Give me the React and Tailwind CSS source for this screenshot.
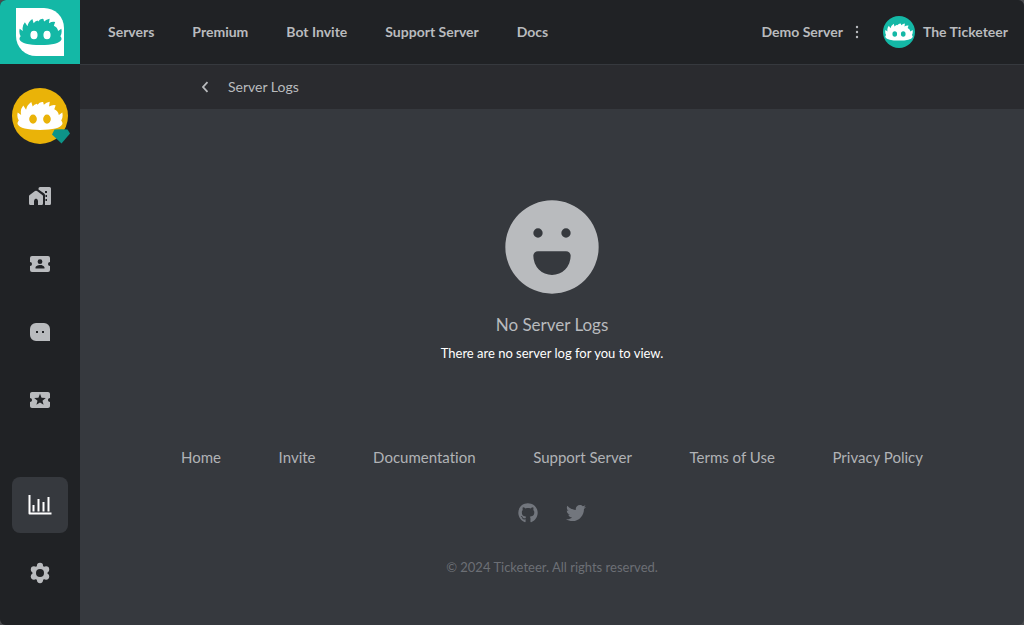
import { FaGithub, FaTwitter } from "react-icons/fa";
import { MdLocalActivity } from "react-icons/md";

const navLinks = ["Servers", "Premium", "Bot Invite", "Support Server", "Docs"];
const footerLinks = ["Home", "Invite", "Documentation", "Support Server", "Terms of Use", "Privacy Policy"];

// Spiky-haired mascot face; the eyes are holes so the backdrop shows through.
function Mascot({ className }) {
  return (
    <svg viewBox="0 0 132 84" className={className} fill="currentColor" fillRule="evenodd" aria-hidden="true">
      <path d="M5 56Q-1 46 2 33L12 40Q8 25 18 13L26 25Q28 12 41 3L45 16Q49 10 57 8L59 11Q65 1 75 3L77 11Q84 3 94 2L92 16Q101 10 111 12L107 24Q118 29 120 40L130 33Q133 46 127 56Q132 62 130 67Q122 83 66 83Q10 83 2 67Q0 62 5 56ZM46 39A11 13 0 1 0 46 65 11 13 0 1 0 46 39ZM86 39A11 13 0 1 0 86 65 11 13 0 1 0 86 39Z" />
    </svg>
  );
}

function HomeIcon() {
  return (
    <svg viewBox="0 0 24 24" className="size-6" fill="currentColor" fillRule="evenodd" aria-hidden="true">
      <path d="M12 3H21.500A1.500 1.500 0 0 1 23 4.500V19.500A1.500 1.500 0 0 1 21.500 21H17V11.200Q17 10.200 16.200 9.600L10.500 5.500V4.500A1.500 1.500 0 0 1 12 3ZM17 7V9H19V7ZM17.500 11V13H19V11ZM17.500 15V17H19V15Z" />
      <path d="M7 7.100Q8 6.400 9 7.100L14.300 11Q15 11.500 15 12.400V19.500A1.500 1.500 0 0 1 13.500 21H10V17Q10 15.500 8 14.600Q6 15.500 6 17V21H2.500A1.500 1.500 0 0 1 1 19.500V12.400Q1 11.500 1.700 11Z" />
    </svg>
  );
}

function TicketPersonIcon() {
  return (
    <svg viewBox="0 0 24 24" className="size-6" fill="currentColor" fillRule="evenodd" aria-hidden="true">
      <path d="M20 12a2 2 0 0 1 2-2V6a2 2 0 0 0-2-2H4a2 2 0 0 0-2 2v4a2 2 0 0 1 0 4v4a2 2 0 0 0 2 2h16a2 2 0 0 0 2-2v-4a2 2 0 0 1-2-2ZM12 7.300a2.400 2.400 0 1 1 0 4.800 2.400 2.400 0 0 1 0-4.800ZM7.500 16.500v-1c0-1.600 3-2.500 4.500-2.500s4.500.9 4.500 2.500v1Z" />
    </svg>
  );
}

function ChatIcon() {
  return (
    <svg viewBox="0 0 24 24" className="size-6" fill="currentColor" fillRule="evenodd" aria-hidden="true">
      <path d="M8 3h8a6 6 0 0 1 6 6v12H8a6 6 0 0 1-6-6V9a6 6 0 0 1 6-6ZM8 11v2h2v-2ZM14 11v2h2v-2Z" />
    </svg>
  );
}

function ChartIcon() {
  return (
    <svg viewBox="0 0 24 24" className="size-6" fill="none" stroke="currentColor" strokeWidth="2" aria-hidden="true">
      <path d="M1.500 2V20.500H23.500" strokeLinejoin="round" />
      <path d="M5.500 18.500V12M10.500 18.500V6M15.500 18.500V9M20.500 18.500V4" />
    </svg>
  );
}

function GearIcon() {
  return (
    <svg viewBox="0 0 24 24" className="size-6" aria-hidden="true">
      <g fill="currentColor">
        <circle cx="12" cy="12" r="7.600" />
        <circle cx="12" cy="4.900" r="3.100" />
        <circle cx="12" cy="19.100" r="3.100" />
        <circle cx="5.900" cy="8.450" r="3.100" />
        <circle cx="18.100" cy="8.450" r="3.100" />
        <circle cx="5.900" cy="15.550" r="3.100" />
        <circle cx="18.100" cy="15.550" r="3.100" />
      </g>
      <circle cx="12" cy="12" r="4" className="fill-[#202225]" />
    </svg>
  );
}

function SmileIcon() {
  return (
    <svg viewBox="0 0 24 24" className="size-28" fill="currentColor" fillRule="evenodd" aria-hidden="true">
      <path d="M12 2a10 10 0 1 1 0 20 10 10 0 0 1 0-20ZM9 8a1 1 0 1 0 0 2 1 1 0 0 0 0-2ZM15 8a1 1 0 1 0 0 2 1 1 0 0 0 0-2ZM9 12.900a1 1 0 0 0-1 1a4 4.100 0 0 0 8 0a1 1 0 0 0-1-1Z" />
    </svg>
  );
}

function MoreIcon() {
  return (
    <svg viewBox="0 0 20 20" className="size-5" fill="currentColor" aria-hidden="true">
      <circle cx="10" cy="5" r="1.200" />
      <circle cx="10" cy="10" r="1.200" />
      <circle cx="10" cy="15" r="1.200" />
    </svg>
  );
}

function BackIcon() {
  return (
    <svg viewBox="0 0 24 24" className="size-6" fill="none" stroke="currentColor" strokeWidth="1.800" aria-hidden="true">
      <path d="M15.500 7.200 11 12l4.500 4.800" />
    </svg>
  );
}

function SideLink({ label, active, children }) {
  return (
    <a
      href="#"
      aria-label={label}
      className={active ? "flex size-14 items-center justify-center rounded-lg bg-[#36393e] text-white" : "flex size-14 items-center justify-center rounded-lg text-[#b9bbbe]"}
    >
      {children}
    </a>
  );
}

function Sidebar() {
  return (
    <aside className="flex w-20 shrink-0 flex-col items-center bg-[#202225] pb-6">
      <a href="#" aria-label="Ticketeer" className="flex h-16 w-full items-center justify-center bg-[#14b8a6]">
        <span className="flex size-12 items-center justify-center rounded-tr-[20px] rounded-bl-[20px] bg-white text-[#14b8a6]">
          <Mascot className="w-[43px]" />
        </span>
      </a>
      <a href="#" aria-label="Demo Server" className="relative mt-6 flex size-14 items-center justify-center rounded-full bg-[#eab308] text-white">
        <Mascot className="w-[46px]" />
        <svg viewBox="0 0 18 16" className="absolute -right-0.5 bottom-0 h-4 w-[18px] fill-[#0d9488]" aria-hidden="true">
          <path d="M2.500 1.500Q9 .8 15.500 1.500L18 5.500 9.500 15.500 0 6.500Z" />
        </svg>
      </a>
      <nav aria-label="Server" className="mt-6 flex flex-1 flex-col gap-3">
        <SideLink label="Overview"><HomeIcon /></SideLink>
        <SideLink label="Tickets"><TicketPersonIcon /></SideLink>
        <SideLink label="Messages"><ChatIcon /></SideLink>
        <SideLink label="Featured"><MdLocalActivity className="size-6" /></SideLink>
        <div className="mt-auto flex flex-col gap-3">
          <SideLink label="Logs" active><ChartIcon /></SideLink>
          <SideLink label="Settings"><GearIcon /></SideLink>
        </div>
      </nav>
    </aside>
  );
}

function Header() {
  return (
    <header className="flex h-[65px] items-center justify-between border-b border-[#36393e] bg-[#202225] pr-4 pl-7 text-sm font-bold text-[#b9bbbe]">
      <nav aria-label="Main" className="flex gap-[38px]">
        {navLinks.map((label) => (
          <a key={label} href="#" className="whitespace-nowrap">{label}</a>
        ))}
      </nav>
      <div className="flex items-center">
        <span className="whitespace-nowrap">Demo Server</span>
        <button type="button" aria-label="Server menu" className="mr-4 ml-1">
          <MoreIcon />
        </button>
        <a href="#" className="flex items-center gap-2 whitespace-nowrap">
          <span className="flex size-8 items-center justify-center rounded-full bg-[#14b8a6] text-white">
            <Mascot className="w-7" />
          </span>
          The Ticketeer
        </a>
      </div>
    </header>
  );
}

export default function App() {
  return (
    <div className="bg-[#4a4b4e] font-['Lato','Noto_Sans',sans-serif] [font-variant-ligatures:none]">
      <div className="flex min-h-screen overflow-hidden rounded-md bg-[#36393e]">
        <Sidebar />
        <div className="flex min-w-0 flex-1 flex-col">
          <Header />
          <div className="h-11 bg-[#2a2b2f] px-6 text-[#b9bbbe]">
            <div className="mx-auto flex h-full max-w-[720px] items-center gap-3">
              <button type="button" aria-label="Back">
                <BackIcon />
              </button>
              <h1 className="text-sm">Server Logs</h1>
            </div>
          </div>
          <main className="flex flex-col items-center pt-[82px] text-center">
            <span className="text-[#b9bbbe]"><SmileIcon /></span>
            <h2 className="mt-2 text-[17px] leading-7 text-[#b9bbbe]">No Server Logs</h2>
            <p className="mt-1 text-[13px] leading-5 text-white">There are no server log for you to view.</p>
          </main>
          <footer className="flex flex-col items-center px-6 pt-20 pb-11">
            <nav aria-label="Footer" className="flex w-full max-w-[742px] flex-wrap justify-between text-[15px] leading-7 text-[#b1b3b6]">
              {footerLinks.map((label) => (
                <a key={label} href="#">{label}</a>
              ))}
            </nav>
            <div className="mt-8 flex gap-7 text-[#72767d]">
              <a href="#" aria-label="GitHub"><FaGithub className="size-5" /></a>
              <a href="#" aria-label="Twitter"><FaTwitter className="size-5" /></a>
            </div>
            <p className="mt-[34px] text-[13px] leading-5 text-[#6c6f75]">© 2024 Ticketeer. All rights reserved.</p>
          </footer>
        </div>
      </div>
    </div>
  );
}
